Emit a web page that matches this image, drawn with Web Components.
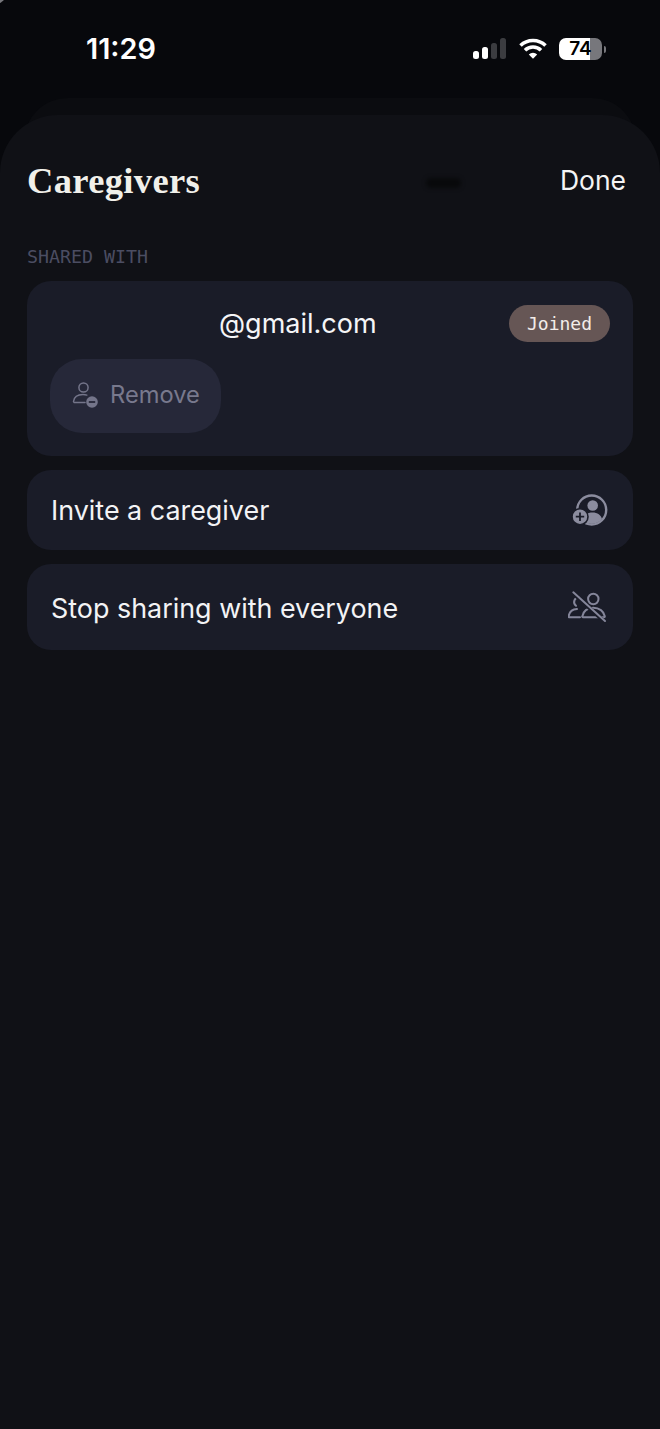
<!DOCTYPE html>
<html>
<head>
<meta charset="utf-8">
<style>
  html, body { margin: 0; padding: 0; background: #07080c; }
  body { width: 660px; height: 1429px; overflow: hidden; font-family: Inter, "Liberation Sans", sans-serif; }
</style>
</head>
<body>
<caregivers-screen>
  <status-bar slot="status"></status-bar>
  <sheet-header slot="header" title="Caregivers" action="Done"></sheet-header>
  <section-label>SHARED WITH</section-label>
  <member-card email="@gmail.com" state="Joined" action="Remove"></member-card>
  <action-row label="Invite a caregiver" icon="invite" size="80"></action-row>
  <action-row label="Stop sharing with everyone" icon="stop" size="86"></action-row>
</caregivers-screen>

<script>
const icons = {
  remove: `<svg width="28" height="28" viewBox="0 2 28 28" fill="none">
      <circle cx="12.5" cy="7.5" r="4.6" stroke="#74758a" stroke-width="1.5"/>
      <path d="M2.5 21.5c.6-4.6 4.6-7 9.5-7 1.4 0 2.6.2 3.8.6M3 22.5h11" stroke="#74758a" stroke-width="1.5" stroke-linecap="round"/>
      <circle cx="21" cy="22" r="5.8" fill="#74758a"/>
      <path d="M17.8 22h6.4" stroke="#262839" stroke-width="1.8"/>
    </svg>`,
  invite: `<svg width="38" height="34" viewBox="0 0 38 34" fill="none">
      <circle cx="20.700" cy="17" r="14.500" stroke="#8b8c9e" stroke-width="2.400"/>
      <circle cx="21.700" cy="12.500" r="5.300" fill="#8b8c9e"/>
      <path d="M11 27c1.500-5 5.500-7.500 10.500-7.500s8.500 2.500 9.500 6.500c-2.500 3-6 4.700-10.300 4.700-3.500 0-6.700-1.300-9.700-3.700z" fill="#8b8c9e"/>
      <circle cx="9" cy="23.700" r="8" fill="#8b8c9e" stroke="#1a1c28" stroke-width="1.600"/>
      <path d="M9 19.500v8.400M4.800 23.700h8.400" stroke="#1a1c28" stroke-width="1.800"/>
    </svg>`,
  stop: `<svg width="40" height="34" viewBox="0 0 40 34" fill="none" stroke="#85869a" stroke-width="2" stroke-linecap="round" stroke-linejoin="round" style="margin-right:1px">
      <circle cx="25.300" cy="9" r="5.200"/>
      <path d="M15 27.300c-.5 0-.8-.5-.7-1 .8-5 5-8.600 11-8.600s10.500 3.600 11.500 8.600c.1.500-.2 1-.7 1z"/>
      <path d="M11 7.200a4.800 4.800 0 0 0-3 8.600"/>
      <path d="M9 19c-4.500.3-7.700 3.300-8.400 7.300-.1.500.3 1 .9 1H12"/>
      <path d="M6 4 38 33" stroke="#1a1c28" stroke-width="4" stroke-linecap="butt"/>
      <path d="M5.300 2.300 37 31"/>
    </svg>`
};

class CaregiversScreen extends HTMLElement {
  constructor() {
    super();
    this.attachShadow({ mode: 'open' });
    this.shadowRoot.innerHTML = `
    <style>
      :host { display: block; width: 660px; height: 1429px; position: relative; overflow: hidden;
              background: #07080c; }
      .corner { position: absolute; left: 0; top: 0; width: 6px; height: 5px;
                background: linear-gradient(140deg, #77777c 0 2px, transparent 3px); }
      .back { position: absolute; left: 24px; right: 24px; top: 98px; height: 80px;
              border-radius: 44px 44px 0 0; background: #0b0c10; }
      .sheet { position: absolute; left: 0; right: 0; top: 115px; bottom: 0;
               border-radius: 58px 58px 0 0; background: #101116;
               padding: 0 27px; box-sizing: border-box; }
      .list { display: flex; flex-direction: column; gap: 14px; }
    </style>
    <div class="corner"></div>
    <slot name="status"></slot>
    <div class="back"></div>
    <div class="sheet">
      <slot name="header"></slot>
      <div class="list"><slot></slot></div>
    </div>`;
  }
}

class StatusBar extends HTMLElement {
  constructor() {
    super();
    this.attachShadow({ mode: 'open' });
    this.shadowRoot.innerHTML = `
    <style>
      :host { display: flex; align-items: center; justify-content: space-between; height: 98px;
              padding: 0 54px 0 86px; box-sizing: border-box; color: #fff; }
      .time { font: 600 28.800px/1 Inter, "Liberation Sans", sans-serif; color: #fff; margin-top: 1px; }
      .right { display: flex; align-items: center; gap: 12px; }
      .signal { margin-right: 1px; }
      .batt { position: relative; width: 43px; height: 22px; border-radius: 7px; overflow: hidden;
              background: linear-gradient(90deg, #fff 0 73%, #77777c 73%);
              color: #000; font: 600 19px/22px Inter, "Liberation Sans", sans-serif; text-align: center; }
      .cap { width: 2px; height: 7px; background: #77777c; border-radius: 0 2px 2px 0; margin-left: -10px; }
    </style>
    <span class="time">11:29</span>
    <span class="right">
      <svg class="signal" width="33" height="22" viewBox="0 0 33 22">
        <rect x="0" y="13" width="6" height="8" rx="2.500" fill="#fff"/>
        <rect x="9" y="9" width="6" height="12" rx="2.500" fill="#fff"/>
        <rect x="18" y="5" width="6" height="16" rx="2.500" fill="#3b3c40"/>
        <rect x="27" y="0" width="6" height="21" rx="2.500" fill="#3b3c40"/>
      </svg>
      <svg width="28" height="22" viewBox="0 0 28 22" fill="none" stroke="#fff" stroke-width="3.600">
        <path d="M1.500 7.500a18 18 0 0 1 25 0"/>
        <path d="M6 12.200a11.500 11.500 0 0 1 16 0"/>
        <path d="M14 20.800 9.800 16.500a6 6 0 0 1 8.400 0z" fill="#fff" stroke="none"/>
      </svg>
      <span class="batt">74</span>
      <span class="cap"></span>
    </span>`;
  }
}

class SheetHeader extends HTMLElement {
  constructor() {
    super();
    this.attachShadow({ mode: 'open' });
    this.shadowRoot.innerHTML = `
    <style>
      :host { display: flex; align-items: center; justify-content: space-between; height: 66px;
              margin-top: 33px; margin-bottom: 31px; padding-right: 7px; position: relative; }
      .title { font: 700 36.500px/1 "Liberation Serif", serif; color: #f1f0ea; letter-spacing: .35px; }
      .done { font: 400 26.500px/1 Inter, "Liberation Sans", sans-serif; color: #f4f4f4; margin-top: -2px; }
      .grip { position: absolute; left: 399px; top: 30px; width: 35px; height: 10px; border-radius: 5px;
              background: #08090b; filter: blur(2px); }
    </style>
    <span class="title">${this.getAttribute('title')}</span>
    <span class="grip"></span>
    <span class="done">${this.getAttribute('action')}</span>`;
  }
}

class SectionLabel extends HTMLElement {
  constructor() {
    super();
    this.attachShadow({ mode: 'open' });
    this.shadowRoot.innerHTML = `
    <style>
      :host { display: block; font: 400 18.300px/24px "DejaVu Sans Mono", "Liberation Mono", monospace;
              color: #4b4d62; height: 22px; }
    </style><slot></slot>`;
  }
}

class MemberCard extends HTMLElement {
  constructor() {
    super();
    this.attachShadow({ mode: 'open' });
    this.shadowRoot.innerHTML = `
    <style>
      :host { display: block; height: 175px; box-sizing: border-box; padding: 24px 23px; border-radius: 24px; background: #1a1c28; }
      .top { display: flex; align-items: center; height: 37px; justify-content: space-between; }
      .email { font: 400 27px/1 Inter, "Liberation Sans", sans-serif; color: #f5f5f7; margin-left: 169px; }
      .badge { width: 101px; height: 37px; border-radius: 19px; background: #665655; color: #f2ece9;
               font: 400 18px/37px "DejaVu Sans Mono", "Liberation Mono", monospace; text-align: center; }
      .btn { display: inline-flex; align-items: center; gap: 11px; margin-top: 17px; height: 74px; width: 171px; box-sizing: border-box;
             padding-left: 21px; border-radius: 32px; background: #262839; color: #78798d;
             font: 400 23.700px/1 Inter, "Liberation Sans", sans-serif; }
      .btn span { margin-top: -2px; }
      svg { display: block; }
    </style>
    <div class="top">
      <span class="email">${this.getAttribute('email')}</span>
      <span class="badge">${this.getAttribute('state')}</span>
    </div>
    <div class="btn">${icons.remove}<span>${this.getAttribute('action')}</span></div>`;
  }
}

class ActionRow extends HTMLElement {
  constructor() {
    super();
    this.attachShadow({ mode: 'open' });
    const size = Number(this.getAttribute('size'));
    this.shadowRoot.innerHTML = `
    <style>
      :host { display: flex; align-items: center; justify-content: space-between; box-sizing: border-box;
              padding: 0 24px; border-radius: 24px; background: #1a1c28; height: ${size}px; }
      .label { font: 400 26.900px/1 Inter, "Liberation Sans", sans-serif; color: #f3f3f5; margin-top: ${size > 80 ? 2 : 1}px; }
      svg { display: block; }
    </style>
    <span class="label">${this.getAttribute('label')}</span>
    ${icons[this.getAttribute('icon')]}`;
  }
}

customElements.define('caregivers-screen', CaregiversScreen);
customElements.define('status-bar', StatusBar);
customElements.define('sheet-header', SheetHeader);
customElements.define('section-label', SectionLabel);
customElements.define('member-card', MemberCard);
customElements.define('action-row', ActionRow);
</script>
</body>
</html>
